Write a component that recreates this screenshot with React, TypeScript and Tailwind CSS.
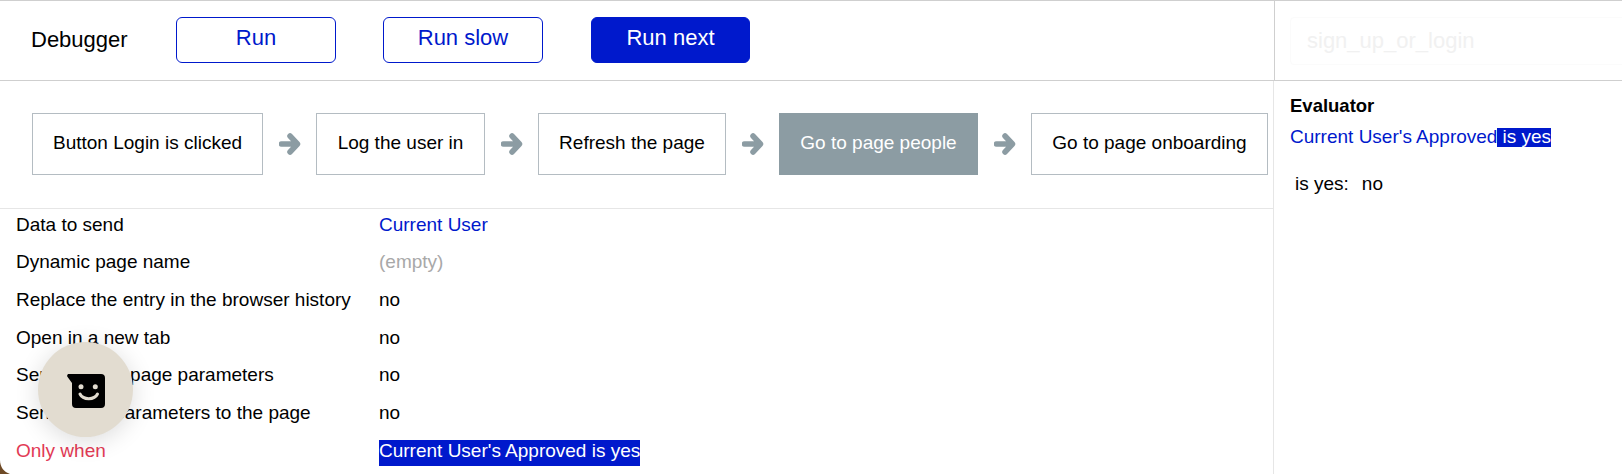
const BLUE = "text-[#0019cc]";

function Arrow() {
  return (
    <svg width="22" height="24" viewBox="0 0 22 24" className="ml-[16px] mr-[15px] shrink-0" aria-hidden="true">
      <path
        d="M2.5 12H17.5M11 4l7.5 8-7.5 8"
        fill="none"
        stroke="#8c9ca3"
        strokeWidth="5.5"
        strokeLinecap="round"
        strokeLinejoin="round"
      />
    </svg>
  );
}

function Step({ label, width, active }: { label: string; width: string; active?: boolean }) {
  return (
    <div
      className={`${width} h-[62px] shrink-0 flex items-center justify-center border pb-[2px] text-[19px] ${
        active ? "bg-[#8c9ca3] border-[#8c9ca3] text-white" : "bg-white border-[#b4bcc2] text-black"
      }`}
    >
      {label}
    </div>
  );
}

function Btn({ label, solid, className }: { label: string; solid?: boolean; className: string }) {
  return (
    <div
      className={`${className} h-[46px] rounded-[6px] border border-[#0019cc] flex items-center justify-center pb-[5px] text-[22px] ${
        solid ? "bg-[#0019cc] text-white" : `bg-white ${BLUE}`
      }`}
    >
      {label}
    </div>
  );
}

function Row({ label, children, labelClass }: { label: string; children: React.ReactNode; labelClass?: string }) {
  return (
    <div className="flex items-center h-[37.7px] pl-4 pb-[6px] text-[19px]">
      <div className={`w-[363px] shrink-0 ${labelClass ?? "text-black"}`}>{label}</div>
      <div>{children}</div>
    </div>
  );
}

export default function App() {
  return (
    <div className="relative w-[1622px] h-[474px] overflow-hidden bg-white text-black font-['Liberation_Sans',Arial,sans-serif]">
      <header className="flex h-[81px] border-t border-b border-[#cfcfcf]">
        <div className="w-[1274px] flex items-center pl-[31px] pb-[1px]">
          <div className="w-[145px] text-[22px] pb-[2px]">Debugger</div>
          <Btn label="Run" className="w-[160px]" />
          <Btn label="Run slow" className="w-[160px] ml-[47px]" />
          <Btn label="Run next" solid className="w-[159px] ml-[48px]" />
        </div>
        <div className="flex-1 border-l border-[#cfcfcf] pl-[15px] pt-[16px] overflow-hidden">
          <div className="h-[48px] w-[360px] rounded-[4px] border border-[#fbfbfb] pl-4 pb-[2px] flex items-center text-[22px] text-[#f1f1f1]">
            sign_up_or_login
          </div>
        </div>
      </header>
      <div className="flex h-[393px]">
        <main className="w-[1273px] shrink-0">
          <div className="h-[128px] border-b border-[#e6e6e6] pl-8 pt-[32px] flex items-start">
            <div className="flex items-center">
              <Step label="Button Login is clicked" width="w-[231px]" />
              <Arrow />
              <Step label="Log the user in" width="w-[169px]" />
              <Arrow />
              <Step label="Refresh the page" width="w-[188px]" />
              <Arrow />
              <Step label="Go to page people" width="w-[199px]" active />
              <Arrow />
              <Step label="Go to page onboarding" width="w-[237px]" />
            </div>
          </div>
          <Row label="Data to send"><span className={BLUE}>Current User</span></Row>
          <Row label="Dynamic page name"><span className="text-[#a8a8a8]">(empty)</span></Row>
          <Row label="Replace the entry in the browser history">no</Row>
          <Row label="Open in a new tab">no</Row>
          <Row label="Send current page parameters">no</Row>
          <Row label="Send more parameters to the page">no</Row>
          <Row label="Only when" labelClass="text-[#e23a55]">
            <div className="mt-[4px]">
              <span className="block leading-[22px] pb-[4px] bg-[#0019cc] text-white">Current User's Approved is yes</span>
            </div>
          </Row>
        </main>
        <aside className="flex-1 border-l border-[#e6e6e6] pl-[16px] pt-[14px] text-[19px]">
          <div className="font-bold text-[18.5px] leading-[22px]">Evaluator</div>
          <div className={`mt-[10px] leading-[19px] whitespace-nowrap ${BLUE}`}>
            Current User's Approved<span className="inline-block leading-[17px] pb-[2px] bg-[#0019cc] text-white pl-[5px]">is yes</span>
          </div>
          <div className="mt-[27px] pl-[5px] flex leading-[20px]">
            <span>is yes:</span>
            <span className="ml-[13px]">no</span>
          </div>
        </aside>
      </div>

      <div className="absolute left-[38px] top-[342px] w-[95px] h-[95px] rounded-full bg-[#e2dcd0] shadow-[0_4px_24px_rgba(0,0,0,0.14)] flex items-center justify-center pt-[2px]">
        <svg width="38" height="34" viewBox="0 0 38 34" aria-hidden="true">
          <path d="M2 0H34a4 4 0 0 1 4 4V30a4 4 0 0 1-4 4H9a4 4 0 0 1-4-4V9L.6 3C-.4 1.4.4 0 2 0Z" fill="#000" />
          <circle cx="14" cy="12.7" r="2.5" fill="#e2dcd0" />
          <circle cx="28.3" cy="12.7" r="2.5" fill="#e2dcd0" />
          <path d="M13 20c3 6.2 14.5 6.2 17.5 0" fill="none" stroke="#e2dcd0" strokeWidth="3" strokeLinecap="round" />
        </svg>
      </div>

      <svg width="10" height="14" viewBox="0 0 10 14" className="absolute left-0 bottom-0" aria-hidden="true">
        <path d="M0 0C0 7 4 12 10 14H0Z" fill="#6e4a26" />
      </svg>
    </div>
  );
}
